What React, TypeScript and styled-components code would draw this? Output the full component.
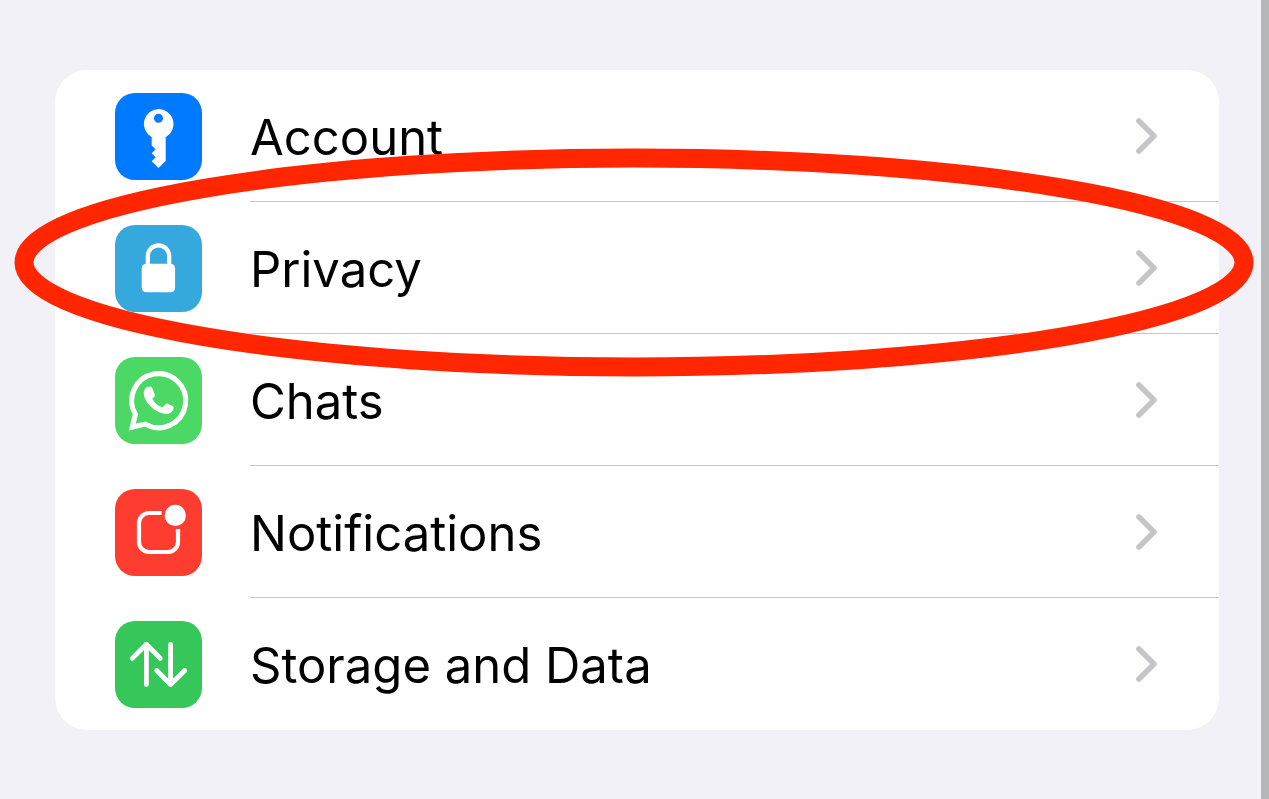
import React from "react";
import styled, { createGlobalStyle } from "styled-components";

const GlobalStyle = createGlobalStyle`
  * { box-sizing: border-box; }
  body {
    margin: 0;
    background: #f2f1f7;
    font-family: Inter, "Liberation Sans", sans-serif;
  }
`;

const Page = styled.main`
  min-height: 100vh;
  padding: 70px 42px 69px 55px;
  border-right: 8px solid #b6b7b9;
`;

const Card = styled.nav`
  position: relative;
  border-radius: 32px;
  background: #fff;
`;

const List = styled.ul`
  margin: 0;
  padding: 0;
  list-style: none;
`;

const Row = styled.a`
  display: flex;
  align-items: center;
  gap: 48px;
  height: 132px;
  padding-left: 60px;
  color: #000;
  text-decoration: none;
`;

const Tile = styled.span<{ $color: string }>`
  flex: none;
  width: 87px;
  height: 87px;
  border-radius: 20px;
  background: ${(p) => p.$color};
`;

const Glyph = styled.svg`
  display: block;
  width: 100%;
  height: 100%;
`;

const Content = styled.span<{ $divided: boolean }>`
  flex: 1;
  align-self: stretch;
  display: flex;
  align-items: center;
  justify-content: space-between;
  padding-right: 61px;
  border-bottom: 1px solid ${(p) => (p.$divided ? "#c6c6c8" : "transparent")};
`;

const Label = styled.span`
  padding-top: 4px;
  font-size: 49px;
  line-height: 64px;
`;

const Chevron = styled.svg`
  width: 22px;
  height: 38px;
`;

const Highlight = styled.svg`
  position: absolute;
  top: 88px;
  left: -31px;
  width: calc(100% + 56px);
  height: 209px;
  overflow: visible;
  pointer-events: none;
`;

const KeyGlyph = () => (
  <path
    fill="#fff"
    fillRule="evenodd"
    d="M43.5 16a15 15 0 0 1 7.2 28.2V68l-7.2 7-6.8-6.7 4-4-4-4 4-4-4-3.8v-8.3A15 15 0 0 1 43.5 16Zm0 4.8a4.5 4.5 0 1 0 0 9 4.5 4.5 0 0 0 0-9Z"
  />
);

const LockGlyph = () => (
  <>
    <rect x="26.7" y="38.7" width="33.4" height="28.5" rx="4.5" fill="#fff" />
    <path d="M32.8 41V31a10.7 10.7 0 0 1 21.4 0v10" fill="none" stroke="#fff" strokeWidth="4.2" />
  </>
);

const ChatGlyph = () => (
  <>
    <path
      d="M20.4 57.3A27 27 0 1 1 30.3 67.1L17.3 70.1Z"
      fill="none"
      stroke="#fff"
      strokeWidth="5.1"
    />
    <path
      fill="#fff"
      d="M28.8 37.5C28.3 33 31 29.8 33.5 29.8h2c.9 0 1.4.5 1.8 1.4l2.4 6c.4 1 .2 1.7-.4 2.5l-2 2.4c2.2 3.8 5.7 6.7 10.2 8.500l2.900-3.300c.6-.8 1.300-1 2.300-.6l5 2.400c1 .5 1.200 1.200.8 2.400-1 3.200-3.600 5.500-6.600 5.500C43.500 57.100 30.500 48 28.800 37.500Z"
    />
  </>
);

const BadgeGlyph = () => (
  <>
    <rect x="24" y="24" width="39" height="39" rx="10" fill="none" stroke="#fff" strokeWidth="4.2" />
    <path d="M47 15h25v25H61L46.3 30Z" fill="#ff3c30" />
    <path d="M60.9 40.8l4.2-.8v3h-4.2Z" fill="#fff" />
    <circle cx="60.3" cy="26.4" r="10.6" fill="#fff" />
  </>
);

const ArrowsGlyph = () => (
  <path
    d="M31.4 63.5V23.3M17.3 37.4 31.4 23.3 45.3 37.4M55.6 23.3V63.5M41.7 49.5 55.6 63.5 69.7 49.5"
    fill="none"
    stroke="#fff"
    strokeWidth="4.8"
    strokeLinecap="round"
    strokeLinejoin="round"
  />
);

const items = [
  { label: "Account", color: "#007aff", icon: <KeyGlyph /> },
  { label: "Privacy", color: "#35a8dd", icon: <LockGlyph /> },
  { label: "Chats", color: "#4cd864", icon: <ChatGlyph /> },
  { label: "Notifications", color: "#ff3c30", icon: <BadgeGlyph /> },
  { label: "Storage and Data", color: "#35c75a", icon: <ArrowsGlyph /> },
];

export default function App() {
  return (
    <>
      <GlobalStyle />
      <Page>
        <Card aria-label="Settings">
          <List>
            {items.map((item, i) => (
              <li key={item.label}>
                <Row href="#">
                  <Tile $color={item.color}>
                    <Glyph viewBox="0 0 87 87" aria-hidden="true">
                      {item.icon}
                    </Glyph>
                  </Tile>
                  <Content $divided={i < items.length - 1}>
                    <Label>{item.label}</Label>
                    <Chevron viewBox="0 0 22 38" aria-hidden="true">
                      <path
                        d="M3 4 18 19 3 34"
                        fill="none"
                        stroke="#c5c5c7"
                        strokeWidth="5.6"
                        strokeLinecap="round"
                        strokeLinejoin="round"
                      />
                    </Chevron>
                  </Content>
                </Row>
              </li>
            ))}
          </List>
          <Highlight aria-hidden="true">
            <ellipse cx="50%" cy="50%" rx="50%" ry="50%" fill="none" stroke="#ff2600" strokeWidth="19" />
          </Highlight>
        </Card>
      </Page>
    </>
  );
}
